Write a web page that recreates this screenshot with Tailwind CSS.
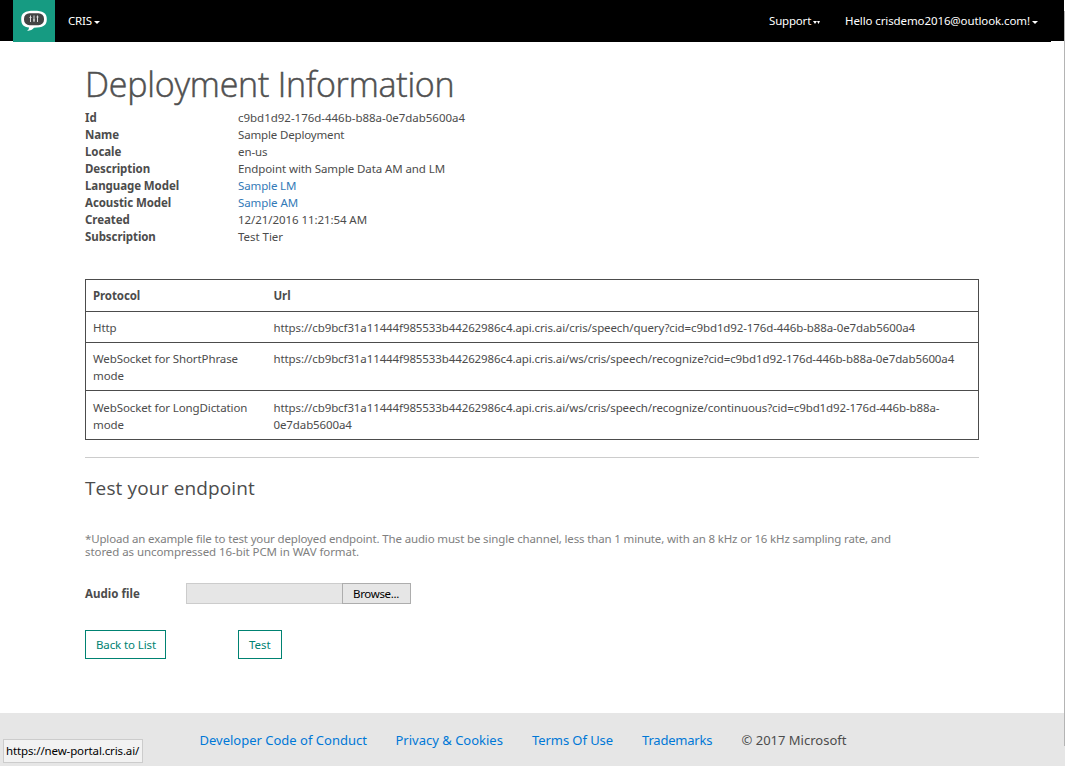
<!DOCTYPE html>
<html lang="en">
<head>
<meta charset="utf-8">
<title>Deployment Information</title>
<script src="https://cdn.jsdelivr.net/npm/@tailwindcss/browser@4"></script>
</head>
<body class="bg-white font-['Noto_Sans','Open_Sans',sans-serif] text-[#4c4c4c] text-[11.5px] leading-[17px]">
<div class="relative w-[1065px] h-[766px] overflow-hidden flex flex-col whitespace-nowrap">
  <header class="h-[42px] bg-black text-white text-[11.5px] flex shrink-0 pl-[13px]">
    <div class="w-[42px] h-[42px] bg-[#169b82] shrink-0">
      <svg class="w-[42px] h-[42px]" viewBox="0 0 42 42"><path d="M21 10.8C12 10.8 8.2 13 8.2 19.2C8.2 24.500 10.500 27 16 27.500C16 29 15.300 30 14 31C17.500 30.500 19.500 29.500 21 27.700C30 27.600 33.800 25.500 33.800 19.200C33.800 13 30 10.800 21 10.800Z" fill="#fff"/><rect x="11" y="13.200" width="20" height="12" rx="5.500" fill="#444"/><path d="M17.500 15.500V22M21 15.500V22M24.500 15.500V22M16.500 17.500H18.500M20 20H22M23.500 17H25.500" stroke="#ddd" stroke-width="1" fill="none"/></svg>
    </div>
    <nav class="flex flex-1 h-[40px] items-center">
      <a class="ml-[13px] w-[24px] tracking-[-0.16px]">CRIS</a>
      <svg class="ml-[2px] mt-[5px] w-[6px] h-[3px]" viewBox="0 0 6 3"><path d="M0 0H6L3 3Z" fill="#fff"/></svg>
      <a class="ml-[669px] w-[42px] tracking-[-0.18px]">Support</a>
      <svg class="ml-[2px] mt-[5px] w-[7px] h-[3px]" viewBox="0 0 7 3"><path d="M0 0H4L2 3ZM4 0H7L5.500 3Z" fill="#fff"/></svg>
      <a class="ml-[25px] w-[185px] tracking-[-0.103px]">Hello crisdemo2016@outlook.com!</a>
      <svg class="ml-[2px] mt-[5px] w-[6px] h-[3px]" viewBox="0 0 6 3"><path d="M0 0H6L3 3Z" fill="#fff"/></svg>
    </nav>
  </header>
  <main class="ml-[85px] w-[894px] flex-1 flex flex-col items-stretch">
    <h1 class="text-[34px] leading-[49px] mt-[18px] font-['Open_Sans',sans-serif] font-light [-webkit-text-stroke:0.5px_#505050] text-[#505050] tracking-[-0.22px]">Deployment Information</h1>
    <dl class="grid grid-cols-[153px_1fr] [&>dt]:font-bold [&>dt]:tracking-[-0.08px]">
      <dt>Id</dt><dd class="tracking-[-0.02px]">c9bd1d92-176d-446b-b88a-0e7dab5600a4</dd>
      <dt>Name</dt><dd class="tracking-[-0.16px]">Sample Deployment</dd>
      <dt>Locale</dt><dd class="tracking-[-0.1px]">en-us</dd>
      <dt>Description</dt><dd class="tracking-[-0.097px]">Endpoint with Sample Data AM and LM</dd>
      <dt>Language Model</dt><dd class="text-[#337ab7] tracking-[-0.13px]">Sample LM</dd>
      <dt>Acoustic Model</dt><dd class="text-[#337ab7] tracking-[-0.09px]">Sample AM</dd>
      <dt>Created</dt><dd class="tracking-[-0.072px]">12/21/2016 11:21:54 AM</dd>
      <dt>Subscription</dt><dd class="tracking-[-0.036px]">Test Tier</dd>
    </dl>
    <section class="mt-[34px] border border-[#4c4c4c] [&>div]:grid [&>div]:grid-cols-[180.500px_1fr] [&>div]:pl-[7px] tracking-[-0.104px]">
      <div class="h-8 pt-[7px] border-b border-[#4c4c4c] font-bold"><span>Protocol</span><span>Url</span></div>
      <div class="h-[31px] pt-[7px] border-b border-[#4c4c4c]"><span>Http</span><span>https://cb9bcf31a11444f985533b44262986c4.api.cris.ai/cris/speech/query?cid=c9bd1d92-176d-446b-b88a-0e7dab5600a4</span></div>
      <div class="h-12 pt-[7px] border-b border-[#4c4c4c]"><span>WebSocket for ShortPhrase<br>mode</span><span>https://cb9bcf31a11444f985533b44262986c4.api.cris.ai/ws/cris/speech/recognize?cid=c9bd1d92-176d-446b-b88a-0e7dab5600a4</span></div>
      <div class="h-12 pt-[8px]"><span>WebSocket for LongDictation<br>mode</span><span>https://cb9bcf31a11444f985533b44262986c4.api.cris.ai/ws/cris/speech/recognize/continuous?cid=c9bd1d92-176d-446b-b88a-<br>0e7dab5600a4</span></div>
    </section>
    <hr class="mt-[17px] border-t border-[#ccc]">
    <h2 class="mt-[18px] text-[19px] leading-6 font-['Open_Sans',sans-serif] tracking-[0.143px]">Test your endpoint</h2>
    <p class="mt-[32px] text-[#808080] leading-[13px] tracking-[-0.155px]">*Upload an example file to test your deployed endpoint. The audio must be single channel, less than 1 minute, with an 8 kHz or 16 kHz sampling rate, and<br><span class="tracking-[-0.075px]">stored as uncompressed 16-bit PCM in WAV format.</span></p>
    <div class="mt-[25px] flex h-[21px] items-center">
      <b class="w-[101px] tracking-[0.05px]">Audio file</b>
      <div class="w-[156px] h-[21px] bg-[#e6e6e6] border border-r-0 border-[#ccc]"></div>
      <button class="w-[69px] h-[21px] bg-[#e6e6e6] border border-[#adadad] text-black flex items-center pl-[10px] tracking-[-0.335px]">Browse...</button>
    </div>
    <div class="mt-[26px] flex text-[#008272]">
      <button class="w-[81px] h-[29px] border border-[#008272] pl-[10px] text-left tracking-[-0.112px]">Back to List</button>
      <button class="ml-[72px] w-[44px] h-[29px] border border-[#008272] pl-[10px] text-left">Test</button>
    </div>
  </main>
  <footer class="h-[53px] bg-[#e6e6e6] shrink-0 pl-[199.500px] pt-[16px] text-[13px] leading-[22px] flex text-[#0078d7]">
    <a class="w-[196px]">Developer Code of Conduct</a><a class="w-[136.500px]">Privacy &amp; Cookies</a><a class="w-[110px] tracking-[-0.072px]">Terms Of Use</a><a class="w-[99.500px] tracking-[-0.2px]">Trademarks</a><span class="text-[#4c4c4c]">© 2017 Microsoft</span>
  </footer>
  <div class="absolute left-[3px] top-[739px] w-[140px] h-6 bg-[#f2f2f2] border border-[#ccc] text-black pl-[2px] leading-[22px] tracking-[-0.13px]">https://new-portal.cris.ai/</div>
  <div class="absolute right-0 top-[11px] w-px h-[735px] bg-[#b4b4b4]"></div>
  <div class="absolute right-0 top-0 w-px h-[11px] bg-white"></div>
  <div class="absolute left-0 top-[41px] w-[13px] h-px bg-white"></div>
  <div class="absolute left-[1051px] top-[41px] w-[13px] h-px bg-white"></div>
</div>
</body>
</html>
